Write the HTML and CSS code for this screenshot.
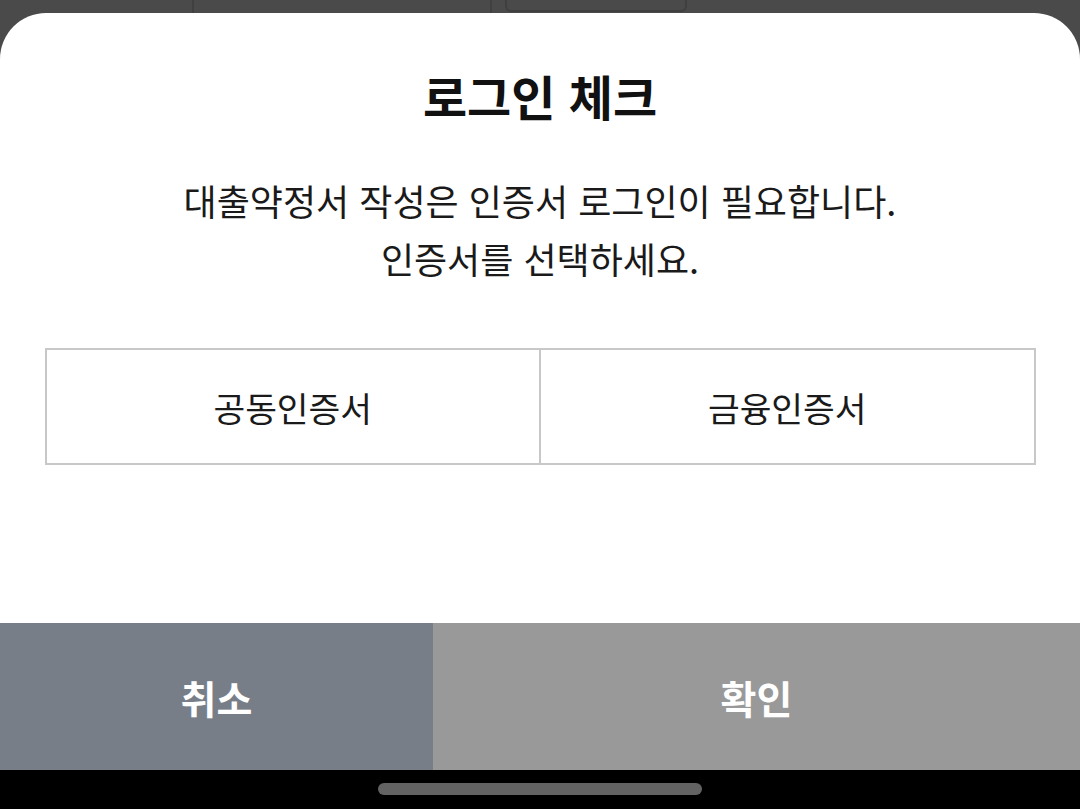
FILE: index.html
```html
<!DOCTYPE html>
<html lang="ko">
<head>
<meta charset="utf-8">
<link rel="stylesheet" href="styles.css">
</head>
<body>
<div class="screen">
  <div class="backdrop">
    <div class="bd-col"></div>
    <div class="bd-box"></div>
  </div>
  <div class="sheet">
    <h1 class="title">로그인 체크</h1>
    <p class="message">대출약정서 작성은 인증서 로그인이 필요합니다.<br>인증서를 선택하세요.</p>
    <div class="options">
      <div class="option">공동인증서</div>
      <div class="option">금융인증서</div>
    </div>
    <div class="spacer"></div>
    <div class="actions">
      <div class="btn cancel">취소</div>
      <div class="btn confirm">확인</div>
    </div>
  </div>
  <div class="navbar"><div class="home"></div></div>
</div>
</body>
</html>
```
FILE: styles.css
```css
* { box-sizing: border-box; }
html, body { margin: 0; padding: 0; }
body {
  width: 1080px;
  height: 809px;
  overflow: hidden;
  background: #4a4a4a;
  font-family: "Noto Sans CJK KR", "Noto Sans", sans-serif;
}
.screen {
  display: flex;
  flex-direction: column;
  height: 809px;
}
.backdrop {
  height: 13px;
  display: flex;
  padding-left: 192px;
  gap: 13px;
}
.bd-col {
  width: 300px;
  border-left: 2px solid #404040;
  border-right: 2px solid #404040;
}
.bd-box {
  width: 182px;
  height: 12px;
  border: 2px solid #3f3f3f;
  border-top: none;
  border-radius: 0 0 6px 6px;
}
.sheet {
  flex: 1;
  background: #fff;
  border-radius: 46px 46px 0 0;
  display: flex;
  flex-direction: column;
  align-items: center;
}
.title {
  margin: 54px 0 0;
  font-size: 48px;
  line-height: 56px;
  font-weight: 700;
  color: #111;
}
.message {
  margin: 48px 0 0;
  font-size: 36px;
  line-height: 58px;
  color: #1a1a1a;
  text-align: center;
}
.options {
  margin-top: 61px;
  width: 991px;
  height: 117px;
  display: flex;
  border: 2px solid #c8c8c8;
}
.option {
  flex: 1;
  display: flex;
  align-items: center;
  justify-content: center;
  font-size: 34.5px;
  color: #1a1a1a;
}
.option + .option {
  border-left: 2px solid #c8c8c8;
}
.spacer { flex: 1; }
.actions {
  width: 100%;
  height: 147px;
  display: flex;
}
.btn {
  display: flex;
  align-items: center;
  justify-content: center;
  color: #fff;
  font-size: 39px;
  font-weight: 700;
}
.cancel { width: 433px; background: #787e88; }
.confirm { flex: 1; background: #999999; }
.navbar {
  height: 39px;
  background: #000;
  display: flex;
  justify-content: center;
  padding-top: 13px;
}
.home {
  width: 324px;
  height: 12px;
  border-radius: 6px;
  background: #636363;
}
```
